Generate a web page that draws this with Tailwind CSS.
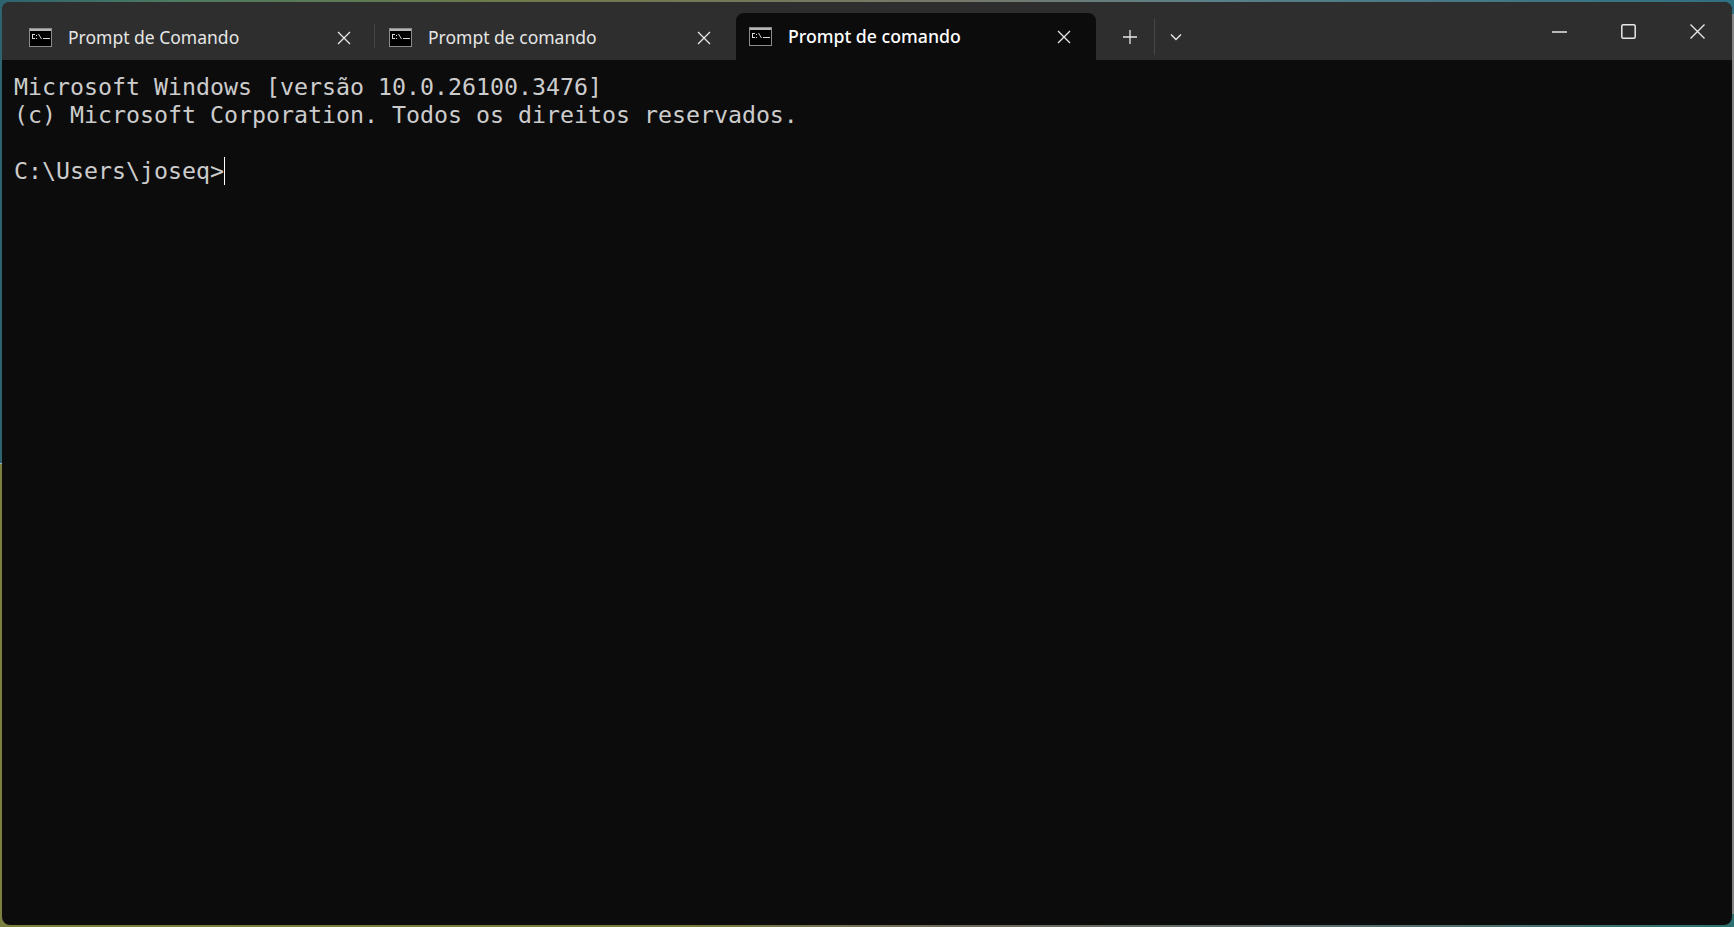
<!DOCTYPE html>
<html lang="en">
  <head>
    <meta charset="UTF-8" />
    <title>Prompt de comando</title>
    <script src="https://cdn.jsdelivr.net/npm/@tailwindcss/browser@4"></script>
  </head>
  <body class="h-[927px] w-[1734px] overflow-hidden p-[2px] [background:linear-gradient(#858585,#858585)_right_center/2px_900px_no-repeat,linear-gradient(90deg,#2d6470,#4d7a60_10%,#6f7a4a_30%,#77786a_55%,#5a8088_70%,#2f7080)_top/100%_50%_no-repeat,linear-gradient(90deg,#7a8040,#787a40_40%,#6f6a5a_55%,#5f6f6f_75%,#2f7070)_bottom/100%_50%_no-repeat]">
    <div class="flex h-[923px] flex-col overflow-hidden rounded-[8px] bg-[#0c0c0c]">
      <!-- title bar -->
      <div class="flex h-[58px] shrink-0 items-end bg-[#2e2e2e] pl-[10px] font-['Noto_Sans',sans-serif] text-[17.5px] text-[#e6e6e6]">
        <div class="flex h-[47px] w-[362px] items-center pl-[17px] pr-[23px] pt-[2px]">
          <svg width="23" height="19" viewBox="0 0 23 19" class="shrink-0">
            <rect x="0.5" y="0.5" width="22" height="18" fill="#000" stroke="#8c8c8c" />
            <rect x="1" y="1" width="21" height="2" fill="#b5b5b5" />
            <path d="M3 6h3v1H3zM3 7h1v3H3zM3 10h3v1H3zM7 7h1v1H7zM7 10h1v1H7zM9 6l3 5h1l-3-5zM14 10h7v1h-7z" fill="#d8d8d8" />
          </svg>
          <span class="ml-[16px] flex-1">Prompt de Comando</span>
          <svg width="14" height="14" viewBox="0 0 14 14" fill="none" stroke="#e8e8e8" stroke-width="1.3"><path d="M1 1l12 12M13 1L1 13" /></svg>
        </div>
        <div class="mb-[12px] h-[24px] w-px bg-[#454545]"></div>
        <div class="flex h-[47px] w-[361px] items-center pl-[14px] pr-[25px] pt-[2px]">
          <svg width="23" height="19" viewBox="0 0 23 19" class="shrink-0">
            <rect x="0.5" y="0.5" width="22" height="18" fill="#000" stroke="#8c8c8c" />
            <rect x="1" y="1" width="21" height="2" fill="#b5b5b5" />
            <path d="M3 6h3v1H3zM3 7h1v3H3zM3 10h3v1H3zM7 7h1v1H7zM7 10h1v1H7zM9 6l3 5h1l-3-5zM14 10h7v1h-7z" fill="#d8d8d8" />
          </svg>
          <span class="ml-[16px] flex-1">Prompt de comando</span>
          <svg width="14" height="14" viewBox="0 0 14 14" fill="none" stroke="#e8e8e8" stroke-width="1.3"><path d="M1 1l12 12M13 1L1 13" /></svg>
        </div>
        <div class="flex h-[47px] w-[360px] items-center rounded-t-[8px] bg-[#0c0c0c] pl-[13px] pr-[25px] text-white">
          <svg width="23" height="19" viewBox="0 0 23 19" class="shrink-0">
            <rect x="0.5" y="0.5" width="22" height="18" fill="#000" stroke="#8c8c8c" />
            <rect x="1" y="1" width="21" height="2" fill="#b5b5b5" />
            <path d="M3 6h3v1H3zM3 7h1v3H3zM3 10h3v1H3zM7 7h1v1H7zM7 10h1v1H7zM9 6l3 5h1l-3-5zM14 10h7v1h-7z" fill="#d8d8d8" />
          </svg>
          <span class="ml-[16px] flex-1 text-[17.7px] font-medium">Prompt de comando</span>
          <svg width="14" height="14" viewBox="0 0 14 14" fill="none" stroke="#e8e8e8" stroke-width="1.3"><path d="M1 1l12 12M13 1L1 13" /></svg>
        </div>
        <div class="mb-[5px] ml-[26px] flex h-[36px] items-center">
          <svg width="16" height="16" viewBox="0 0 16 16" fill="none" stroke="#e8e8e8" stroke-width="1.3"><path d="M8 1v14M1 8h14" /></svg>
          <div class="ml-[16px] h-[36px] w-px bg-[#454545]"></div>
          <svg width="12" height="8" viewBox="0 0 12 8" fill="none" stroke="#e8e8e8" stroke-width="1.4" class="ml-[15px]"><path d="M1 1.5l5 5 5-5" /></svg>
        </div>
        <div class="mb-[21px] ml-auto flex items-center pr-[27px]">
          <svg width="15" height="2" viewBox="0 0 15 2"><path d="M0 1h15" stroke="#e8e8e8" stroke-width="1.5" /></svg>
          <svg width="15" height="15" viewBox="0 0 15 15" fill="none" stroke="#e8e8e8" stroke-width="1.5" class="ml-[54px]"><rect x="0.8" y="0.8" width="13.4" height="13.4" rx="1.5" /></svg>
          <svg width="15" height="15" viewBox="0 0 15 15" fill="none" stroke="#e8e8e8" stroke-width="1.4" class="ml-[54px]"><path d="M0.5 0.5l14 14M14.5 0.5l-14 14" /></svg>
        </div>
      </div>
      <!-- terminal -->
      <div class="whitespace-pre px-[12px] pt-[13px] font-['DejaVu_Sans_Mono',monospace] text-[23.25px] leading-[28px] text-[#cccccc]"><div>Microsoft Windows [versão 10.0.26100.3476]</div><div>(c) Microsoft Corporation. Todos os direitos reservados.</div><div>&nbsp;</div><div class="flex items-center">C:\Users\joseq&gt;<span class="h-[28px] w-px bg-white"></span></div></div>
    </div>
  </body>
</html>
